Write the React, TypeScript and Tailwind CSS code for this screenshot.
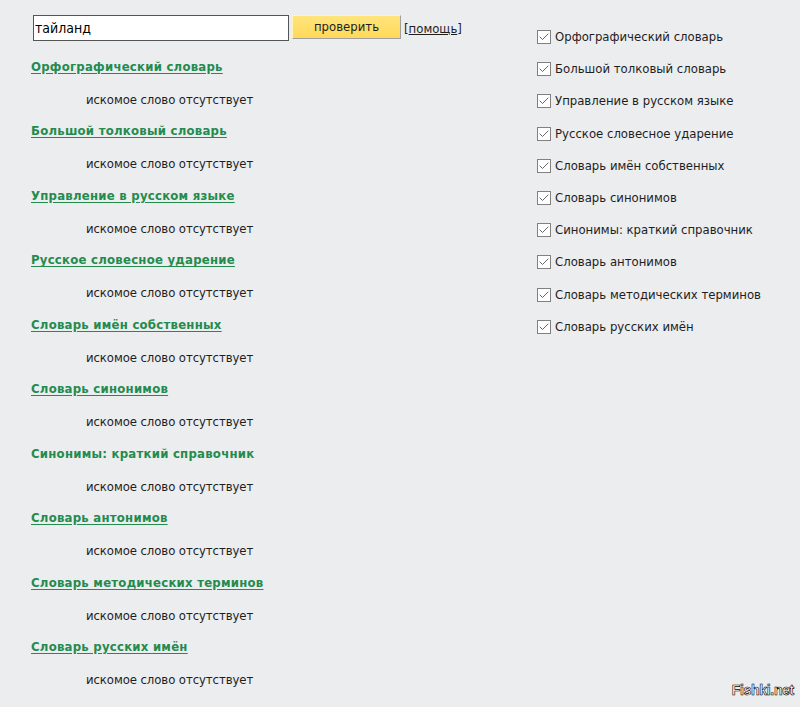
import { Check } from "lucide-react";

const dicts = [
  "Орфографический словарь",
  "Большой толковый словарь",
  "Управление в русском языке",
  "Русское словесное ударение",
  "Словарь имён собственных",
  "Словарь синонимов",
  "Синонимы: краткий справочник",
  "Словарь антонимов",
  "Словарь методических терминов",
  "Словарь русских имён",
];

const font = { fontFamily: '"DejaVu Sans Condensed", "DejaVu Sans", "Liberation Sans", sans-serif' };

export default function App() {
  return (
    <div
      className="relative w-[800px] h-[707px] overflow-hidden bg-[#ecedef] text-[13px] text-[#1e1e1e]"
      style={font}
    >
      <div className="flex">
        {/* Left column: search + results */}
        <div className="w-[506px] pl-[31px] pt-[15px]">
          <div className="flex items-start h-[26px] mb-[18px]">
            <input
              defaultValue="тайланд"
              className="w-[256px] h-[26px] ml-[2px] border border-[#555] bg-white px-[1px] text-[14px] text-black outline-none"
              style={font}
            />
            <button
              className="ml-[3px] w-[109px] h-[24px] bg-gradient-to-b from-[#ffe47c] to-[#ffd957] border border-t-[#fff3c0] border-l-[#fff3c0] border-r-[#a0a0a0] border-b-[#a0a0a0] text-[13px] text-[#1e1e1e]"
              style={font}
            >
              проверить
            </button>
            <span className="ml-[3px] mt-[4px] text-[13px] text-[#1e1e1e]">
              [<span className="underline">помощь</span>]
            </span>
          </div>

          {dicts.map((d, i) => (
            <div key={d}>
              <div
                className={`h-[16px] leading-[16px] font-bold tracking-[0.25px] text-[#238b4e] ${
                  i === 6 ? "" : "underline underline-offset-2"
                }`}
              >
                {d}
              </div>
              <div className="h-[16px] leading-[16px] mt-[17px] mb-[15.44px] pl-[55px] tracking-[-0.08px]">
                искомое слово отсутствует
              </div>
            </div>
          ))}
        </div>

        {/* Right column: dictionary checkboxes */}
        <div className="pl-[31px] pt-[29px] flex flex-col gap-[16.2px]">
          {dicts.map((d) => (
            <label key={d} className="flex items-center h-[16px] leading-[16px]">
              <span className="w-[14px] h-[14px] border border-[#808080] bg-white flex items-center justify-center mr-[4px]">
                <Check size={12} strokeWidth={2} className="text-[#666]" />
              </span>
              <span>{d}</span>
            </label>
          ))}
        </div>
      </div>

      {/* watermark */}
      <div
        className="absolute right-[6px] bottom-[6px] text-[14px] font-bold text-white tracking-[-0.3px]"
        style={{ fontFamily: '"Liberation Sans", sans-serif', WebkitTextStroke: "0.6px #000" }}
      >
        Fishki.net
      </div>
    </div>
  );
}
